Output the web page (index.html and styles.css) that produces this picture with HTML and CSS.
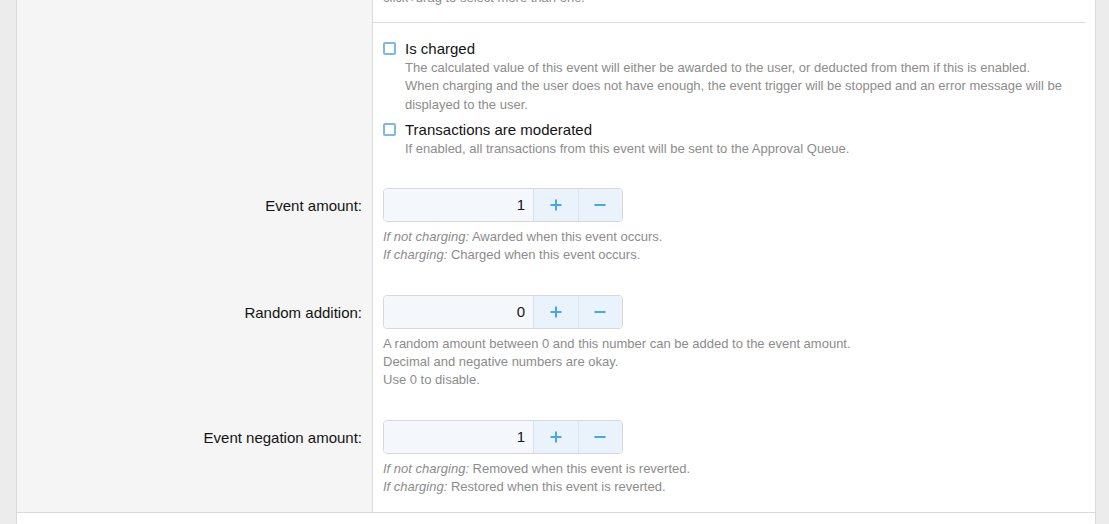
FILE: index.html
```html
<!DOCTYPE html>
<html lang="en">
<head>
    <meta charset="UTF-8">
    <title>Event options</title>
    <link rel="stylesheet" href="styles.css">
</head>
<body>
    <div class="block">
        <div class="form-row">
            <div class="row-label"></div>
            <div class="row-input">
                <div class="explain">Select the user groups this event applies to. Hold ctrl or shift, or<br>click+drag to select more than one.</div>
            </div>
        </div>

        <div class="form-row sep-row">
            <div class="row-label"></div>
            <div class="row-input"><hr class="sep"></div>
        </div>

        <div class="form-row">
            <div class="row-label"></div>
            <div class="row-input">
                <div class="check-list">
                    <label class="check">
                        <span class="box"></span>
                        <span class="check-text">
                            <span class="check-label">Is charged</span>
                            <span class="explain">The calculated value of this event will either be awarded to the user, or deducted from them if this is enabled.<br>When charging and the user does not have enough, the event trigger will be stopped and an error message will be displayed to the user.</span>
                        </span>
                    </label>
                    <label class="check">
                        <span class="box"></span>
                        <span class="check-text">
                            <span class="check-label">Transactions are moderated</span>
                            <span class="explain">If enabled, all transactions from this event will be sent to the Approval Queue.</span>
                        </span>
                    </label>
                </div>
            </div>
        </div>

        <div class="form-row number-row">
            <div class="row-label"><label for="amount">Event amount:</label></div>
            <div class="row-input">
                <div class="number-box">
                    <input type="text" id="amount" value="1">
                    <button class="step"><svg width="12" height="12" viewBox="0 0 12 12"><path d="M6 0.5V11.5M0.5 6H11.5"/></svg></button>
                    <button class="step"><svg width="12" height="12" viewBox="0 0 12 12"><path d="M0.5 6H11.5"/></svg></button>
                </div>
                <div class="explain hint"><i>If not charging:</i> Awarded when this event occurs.<br><i>If charging:</i> Charged when this event occurs.</div>
            </div>
        </div>

        <div class="form-row number-row">
            <div class="row-label"><label for="random">Random addition:</label></div>
            <div class="row-input">
                <div class="number-box">
                    <input type="text" id="random" value="0">
                    <button class="step"><svg width="12" height="12" viewBox="0 0 12 12"><path d="M6 0.5V11.5M0.5 6H11.5"/></svg></button>
                    <button class="step"><svg width="12" height="12" viewBox="0 0 12 12"><path d="M0.5 6H11.5"/></svg></button>
                </div>
                <div class="explain hint">A random amount between 0 and this number can be added to the event amount.<br>Decimal and negative numbers are okay.<br>Use 0 to disable.</div>
            </div>
        </div>

        <div class="form-row number-row">
            <div class="row-label"><label for="negation">Event negation amount:</label></div>
            <div class="row-input">
                <div class="number-box">
                    <input type="text" id="negation" value="1">
                    <button class="step"><svg width="12" height="12" viewBox="0 0 12 12"><path d="M6 0.5V11.5M0.5 6H11.5"/></svg></button>
                    <button class="step"><svg width="12" height="12" viewBox="0 0 12 12"><path d="M0.5 6H11.5"/></svg></button>
                </div>
                <div class="explain hint"><i>If not charging:</i> Removed when this event is reverted.<br><i>If charging:</i> Restored when this event is reverted.</div>
            </div>
        </div>

        <div class="form-submit"></div>
    </div>
</body>
</html>
```

FILE: styles.css
```css
* { box-sizing: border-box; }
body { margin: 0; background: #ececec; font-family: "Liberation Sans", Arial, sans-serif; color: #141414; }
.block { width: 1080px; margin: -45.2px 0 0 16px; border: 1px solid #dadada; border-bottom: none; background: #fff; }
.form-row { display: flex; }
.row-label { flex: none; width: 356px; padding: 23px 10px 15px; background: #f5f5f5; border-right: 1px solid #dadada; text-align: right; font-size: 15px; line-height: 20px; }
.row-input { flex: 1; padding: 15px 10px; }
.number-row .row-input { padding-bottom: 15.5px; }
.sep-row .row-label { padding: 0; }
.sep-row .row-input { padding: 0 10px 0 0; }
.sep { display: block; height: 1px; margin: 0; border: none; background: #dadada; }
.explain { display: block; font-size: 13px; line-height: 1.4; color: #8c8c8c; }
.check-list { display: flex; flex-direction: column; gap: 5px; }
.check { display: flex; align-items: flex-start; }
.box { flex: none; width: 13px; height: 13px; margin: 4px 9px 0 0; border: 2px solid #7fb9e2; border-radius: 2px; background: #fff; }
.check-label { display: block; font-size: 15px; line-height: 21px; }
.number-box { display: flex; width: 240px; height: 34px; border: 1px solid #d8d8d8; border-radius: 4px; overflow: hidden; }
.number-box input { flex: none; width: 149px; border: none; padding: 0 8px; background: #f4f8fc; font: 15px "Liberation Sans", Arial, sans-serif; color: #141414; text-align: right; outline: none; }
.step { flex: 1; display: flex; align-items: center; justify-content: center; padding: 0; border: none; border-left: 1px solid #d8e3ee; background: #eaf3fb; }
.step svg { fill: none; stroke: #47a7eb; stroke-width: 2; }
.hint { margin-top: 6px; }
.form-submit { height: 40px; border-top: 1px solid #dadada; background: #fff; }
```
